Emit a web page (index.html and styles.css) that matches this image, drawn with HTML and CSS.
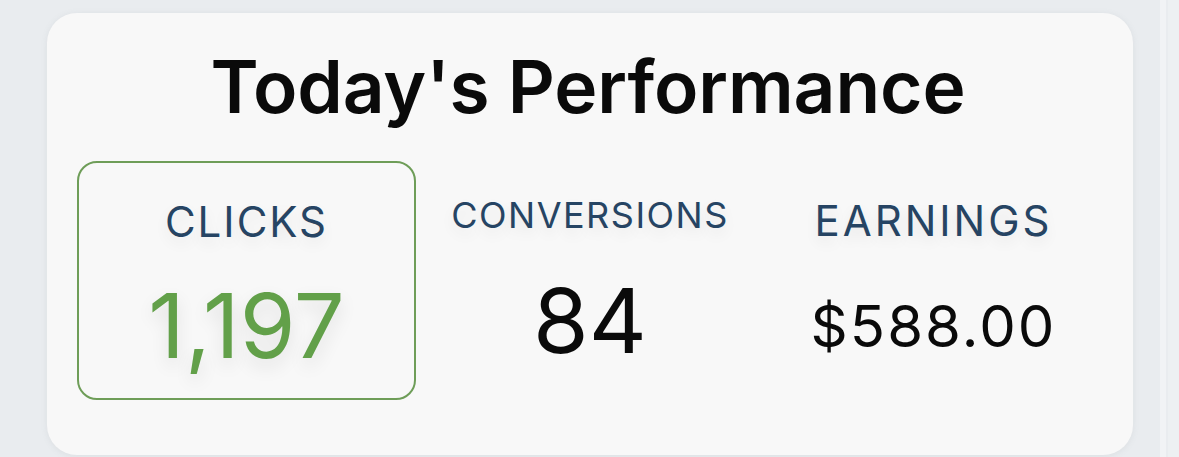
FILE: index.html
```html
<!DOCTYPE html>
<html lang="en">
<head>
<meta charset="utf-8">
<title>Today's Performance</title>
<link rel="stylesheet" href="styles.css">
</head>
<body>
<div class="page">
  <section class="card">
    <h1 class="title">Today's Performance</h1>
    <div class="stats">
      <div class="stat stat-active stat-clicks">
        <div class="label">CLICKS</div>
        <div class="value value-green">1,197</div>
      </div>
      <div class="stat stat-conv">
        <div class="label label-sm">CONVERSIONS</div>
        <div class="value">84</div>
      </div>
      <div class="stat stat-earn">
        <div class="label label-wide">EARNINGS</div>
        <div class="value value-sm">$588.00</div>
      </div>
    </div>
  </section>
  <aside class="side">
    <div class="side-edge"></div>
    <div class="side-panel"></div>
  </aside>
</div>
</body>
</html>
```

FILE: styles.css
```css
* { box-sizing: border-box; }
html, body { margin: 0; height: 100%; }
body {
  background: #e9ecef;
  font-family: "Inter", "Noto Sans", sans-serif;
  overflow: hidden;
}
.page {
  display: flex;
  height: 457px;
  padding: 13px 0 2px 47px;
}
.card {
  width: 1086px;
  height: 442px;
  background: #f8f8f8;
  border-radius: 30px;
  box-shadow: 0 1px 6px rgba(120, 130, 140, 0.12);
  padding: 37px 30px 0;
}
.title {
  margin: 0 0 0 -4px;
  text-align: center;
  font-size: 73px;
  font-weight: 600;
  line-height: 1;
  color: #0a0a0a;
  letter-spacing: -0.1px;
}
.stats {
  margin-top: 38px;
  display: grid;
  grid-template-columns: repeat(3, 339px);
  column-gap: 4.5px;
}
.stat {
  height: 239px;
  display: flex;
  flex-direction: column;
  align-items: center;
  border: 2px solid transparent;
  border-radius: 20px;
}
.stat-active {
  border-color: #6e9d58;
}
.stat-clicks { padding-top: 37.5px; }
.stat-clicks .value { margin-top: 38px; }
.stat-conv { padding-top: 34px; }
.stat-conv .value { margin-top: 42.5px; }
.stat-earn { padding-top: 36.5px; }
.stat-earn .value { margin-top: 55.5px; }
.label {
  font-size: 42px;
  line-height: 1;
  color: #264463;
  letter-spacing: 2px;
  text-shadow: 0 6px 14px rgba(0, 0, 0, 0.08);
}
.label-sm {
  font-size: 36px;
  letter-spacing: 1.5px;
}
.label-wide {
  letter-spacing: 3px;
}
.value {
  font-size: 90px;
  line-height: 1;
  color: #0a0a0a;
}
.value-green {
  color: #62a049;
  text-shadow: 0 8px 18px rgba(0, 0, 0, 0.1);
}
.value-sm {
  font-size: 58px;
  letter-spacing: 2.1px;
}
.side {
  margin-left: 27px;
  flex: 1;
  display: flex;
  margin-top: -13px;
  margin-bottom: -2px;
}
.side-edge {
  width: 6px;
  background: #f1f3f5;
}
.side-panel {
  flex: 1;
  margin-left: 2px;
  background: #edf0f2;
}
```
